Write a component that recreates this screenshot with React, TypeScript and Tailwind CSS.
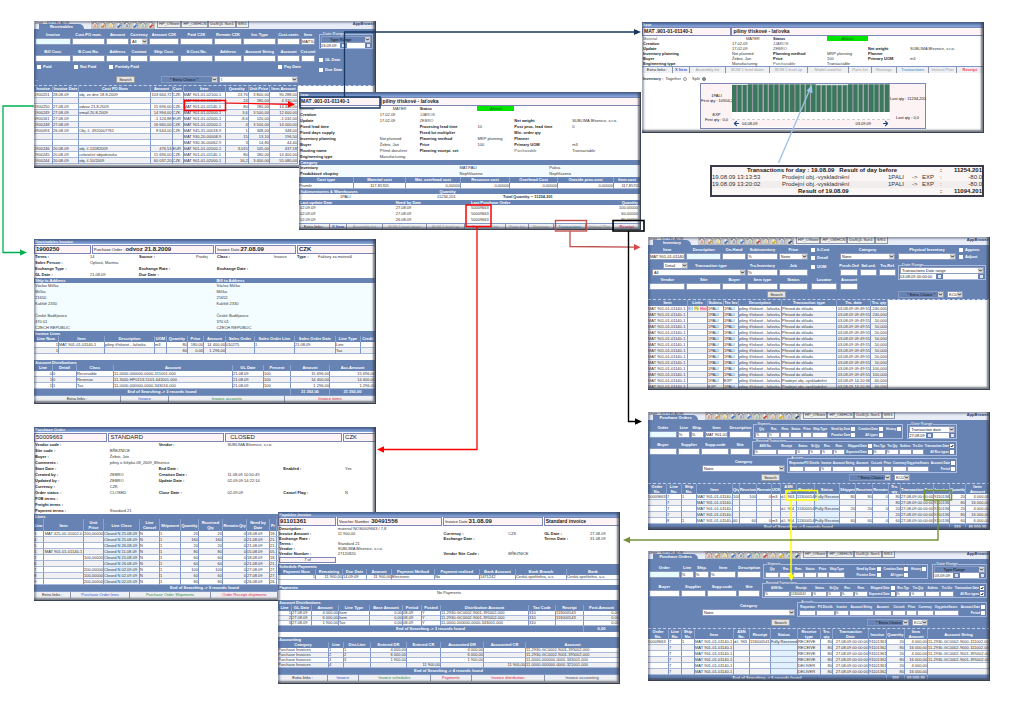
import React from "react";
import clsx from "clsx";
import { ArrowLeft, ArrowRight, ChevronDown } from "lucide-react";

type Cell = React.ReactNode;

const alignment: Record<string, string> = {
  l: "text-left",
  r: "text-right",
  c: "text-center",
};

function Win({
  className,
  children,
}: {
  className: string;
  children: React.ReactNode;
}) {
  return (
    <section
      className={clsx(
        "absolute overflow-hidden bg-white text-[4px] leading-[6px] whitespace-nowrap text-[#333]",
        className,
      )}
    >
      {children}
      <div className="pointer-events-none absolute inset-0 shadow-[inset_-1px_-1px_0_#3a4252,inset_-3px_-3px_2px_rgba(60,65,80,0.7),inset_2px_2px_2px_rgba(50,60,90,0.45)]" />
    </section>
  );
}

function TitleBar({ children }: { children: React.ReactNode }) {
  return (
    <h2 className="h-[5px] bg-linear-to-b from-[#5f7db3] to-[#86a6dc] pl-px leading-[5px] font-bold text-white">
      {children}
    </h2>
  );
}

function Bar({ children }: { children: React.ReactNode }) {
  return (
    <h3 className="h-[5px] bg-[#6683b4] pl-px leading-[5px] font-bold text-white">
      {children}
    </h3>
  );
}

function Box({
  className,
  children,
}: {
  className: string;
  children: React.ReactNode;
}) {
  return (
    <div
      className={clsx(
        "h-[9px] min-w-0 border border-[#7c86b4] bg-[#fff4f5] pl-px leading-[7px] text-[#222]",
        className,
      )}
    >
      {children}
    </div>
  );
}

function Info({
  cols,
  rows,
  className,
}: {
  cols: string;
  rows: Cell[][];
  className?: string;
}) {
  return (
    <div className={clsx("pl-px", className)}>
      {rows.map((row, i) => (
        <div key={i} className={clsx("grid", cols)}>
          {row.map((cell, j) => (
            <div
              key={j}
              className={clsx("min-w-0", j % 2 === 0 && "font-bold text-[#222]")}
            >
              {cell || "\u00a0"}
            </div>
          ))}
        </div>
      ))}
    </div>
  );
}

function Plain({ children }: { children: React.ReactNode }) {
  return <span className="font-normal text-[#555]">{children}</span>;
}

interface TableProps {
  widths: number[];
  head: Cell[];
  align: string;
  rows: Cell[][];
  foot?: [number, Cell][];
  compact?: boolean;
  headHeight?: string;
  blue?: number;
  className?: string;
}

function Table(props: TableProps) {
  const { widths, head, align, rows, foot, compact, headHeight, blue } = props;
  const total = widths.reduce((a, b) => a + b, 0);
  return (
    <table
      className={clsx(
        "table-fixed border-separate border-spacing-0",
        props.className || "w-full",
      )}
    >
      <colgroup>
        {widths.map((w, i) => (
          <col key={i} style={{ width: `${(w / total) * 100}%` }} />
        ))}
      </colgroup>
      <thead>
        <tr className="bg-[#6683b4] text-white">
          {head.map((h, i) => (
            <th
              key={i}
              className={clsx(
                "overflow-hidden border-r border-[#8ba3cf] p-0 text-center align-middle font-bold",
                headHeight
                  ? [headHeight, "leading-[5px] whitespace-pre-line"]
                  : "h-[6px] leading-[6px]",
              )}
            >
              {h}
            </th>
          ))}
        </tr>
      </thead>
      <tbody>
        {rows.map((row, i) => (
          <tr key={i} className={i % 2 ? "bg-[#f1f1f3]" : "bg-white"}>
            {row.map((cell, j) => (
              <td
                key={j}
                className={clsx(
                  "overflow-hidden border-r border-b border-r-[#7f98c6] border-b-[#a9b9d9] p-0",
                  compact ? "h-[5px] leading-[4px]" : "h-[6px] leading-[5px]",
                  alignment[align[j]],
                  blue === j && "bg-[#e2f1ff]",
                )}
              >
                {cell}
              </td>
            ))}
          </tr>
        ))}
      </tbody>
      {foot && (
        <tfoot>
          <tr className="bg-[#6683b4] text-white">
            {foot.map(([span, text], i) => (
              <td
                key={i}
                colSpan={span}
                className="h-[6px] border-r border-[#8ba3cf] p-0 text-center leading-[6px] font-bold"
              >
                {text}
              </td>
            ))}
          </tr>
        </tfoot>
      )}
    </table>
  );
}

function Links({ items }: { items: [string, string][] }) {
  return (
    <nav className="flex border-t border-[#7f98c6] bg-[#eef0f4] text-center">
      {items.map(([text, style]) => (
        <a
          key={text}
          href="#"
          className={clsx(
            "h-[6px] min-w-0 overflow-hidden border-r border-[#8a93a8]",
            style,
          )}
        >
          {text}
        </a>
      ))}
    </nav>
  );
}

/* form controls */

function Field({
  label,
  value = "",
  className,
  tint,
  tight,
}: {
  label: string;
  value?: string;
  className: string;
  tint?: boolean;
  tight?: boolean;
}) {
  return (
    <label
      className={clsx(
        "flex min-w-0 flex-col text-center font-bold text-white",
        tight ? "leading-[5px]" : "leading-[6px]",
        className,
      )}
    >
      <span className={clsx("flex justify-center", tight ? "h-[5px]" : "h-[6px]")}>
        {label}
      </span>
      <input
        defaultValue={value}
        className={clsx(
          "w-full border border-[#8b9cc0] font-normal text-[#222]",
          tight ? "h-[6px]" : "h-[7px]",
          tint ? "bg-[#e8fbff]" : "bg-white",
        )}
      />
    </label>
  );
}

function Select({
  value,
  label,
  className,
  dark,
}: {
  value: string;
  label: string;
  className: string;
  dark?: boolean;
}) {
  return (
    <span className={clsx("relative block h-[7px] min-w-0", className)}>
      <select
        aria-label={label}
        className={clsx(
          "block h-full w-full appearance-none border border-[#8b9cc0] leading-[5px]",
          dark ? "bg-[#6683b4] pl-[8px] text-[#111]" : "bg-white pl-px text-[#222]",
        )}
      >
        <option>{value}</option>
      </select>
      <ChevronDown
        className="pointer-events-none absolute top-px right-px size-[5px] bg-[#d6d6d6] text-black"
        strokeWidth={4}
      />
    </span>
  );
}

function Check({
  label,
  checked,
  after,
  className,
}: {
  label: string;
  checked?: boolean;
  after?: boolean;
  className?: string;
}) {
  return (
    <label
      className={clsx(
        "flex h-[6px] items-center leading-[6px] font-bold text-white",
        after ? "flex-row-reverse gap-px" : "gap-[2px]",
        className,
      )}
    >
      <span className="relative size-[4px]">
        <input
          type="checkbox"
          defaultChecked={checked}
          className="peer block size-[4px] appearance-none bg-white"
        />
        <svg
          viewBox="0 0 8 8"
          className="pointer-events-none absolute inset-0 hidden size-[4px] peer-checked:block"
        >
          <path d="M1.5 4 L3.5 6 L6.5 2" fill="none" stroke="#111" strokeWidth="2" />
        </svg>
      </span>
      {label}
    </label>
  );
}

function Group({
  title,
  className,
  children,
}: {
  title: string;
  className: string;
  children: React.ReactNode;
}) {
  return (
    <fieldset
      className={clsx("min-w-0 border border-[#a9bbdf] px-px text-white", className)}
    >
      <legend className="ml-[2px] h-[4px] leading-[4px]">{title}</legend>
      {children}
    </fieldset>
  );
}

function DateRange({
  type,
  from,
  className,
  dark,
}: {
  type: string;
  from: string;
  className: string;
  dark?: boolean;
}) {
  return (
    <Group title="Date Range" className={className}>
      <Select label="Date range type" value={type} dark={dark} className="w-full" />
      <div className="flex items-center gap-px">
        <input
          aria-label="Date from"
          defaultValue={from}
          className="h-[5px] min-w-0 flex-1 bg-white text-[#222]"
        />
        <span className="size-[5px] border border-[#6b7fae] bg-[#dfe6f4]" />
        <input aria-label="Date to" className="h-[5px] min-w-0 flex-1 bg-white" />
        <span className="size-[5px] border border-[#6b7fae] bg-[#dfe6f4]" />
      </div>
    </Group>
  );
}

function SearchButton() {
  return (
    <button className="h-[7px] w-[19px] border border-[#9a9a9a] bg-[#e4e4e4] leading-[5px] text-[#222]">
      Search
    </button>
  );
}

const accents = ["#c0392b", "#c77f3a", "#d9a800", "#3567b8", "#27406f", "#3b6fd1", "#4d8c4a"];

function ToolIcon({ index }: { index: number }) {
  const color = accents[index % accents.length];
  return (
    <svg viewBox="0 0 16 16" className="size-[8px] shrink-0">
      <rect x="0.5" y="0.5" width="15" height="15" fill="#f3f1ea" stroke="#a0a0a0" />
      <path d="M4 2.5h6l3 3v8H4z" fill="#fff" stroke="#666" />
      <path d="M10 2.5v3h3" fill="none" stroke="#666" />
      <path
        d={index % 2 ? "M5 12l5-5 2 2-5 4z" : "M6 8h5M6 10.500h5M2 6l4-3"}
        fill={index % 2 ? color : "none"}
        stroke={color}
        strokeWidth="1.4"
      />
    </svg>
  );
}

function Toolbar({
  title,
  icons,
  wide,
}: {
  title: string;
  icons: number;
  wide?: boolean;
}) {
  return (
    <header className="flex h-[8px] items-start bg-[#e7ecf6]">
      <div className={clsx("shrink-0", wide ? "w-[57px]" : "w-[50px]")}>
        <p className="h-[3px] pl-px leading-[3px] text-[#445]">User : KITTELADM</p>
        <h2
          className={clsx(
            "ml-[5px] h-[5px] rounded-tr-md bg-[#6683b4] text-center leading-[6px] font-bold text-white",
            wide ? "w-[45px]" : "w-[38px]",
          )}
        >
          {title}
        </h2>
      </div>
      <div className="flex">
        {Array.from({ length: icons }, (_, i) => (
          <ToolIcon key={i} index={i} />
        ))}
      </div>
      <nav className="ml-[2px] flex text-[#334]">
        {["HP_OStore", "HP_OMHCN", "DaSQL Sun1", "SRI1"].map((t) => (
          <a
            key={t}
            href="#"
            className="h-[7px] border border-t-0 border-[#8f98ab] bg-[#f1f1ee] px-px leading-[6px]"
          >
            {t}
          </a>
        ))}
      </nav>
      <p className="ml-auto pr-px leading-[5px] font-bold text-[#223a6b]">AppBrowse</p>
    </header>
  );
}

/* windows */

function Receivables() {
  const m = "MAT 901-01-";
  return (
    <Win className="top-[21px] left-[34px] w-[342px]">
      <Toolbar wide title="Receivables" icons={8} />
      <form className="border-b border-dashed border-[#c4d0ea] bg-[#6683b4] pt-[3px] pb-[2px] pl-px">
        <div className="flex gap-[4px]">
          <div className="w-[280px]">
            <div className="flex gap-px">
              <Field label="Invoice" className="flex-[36]" tint />
              <Field label="Cust.PO num." className="flex-[33]" />
              <Field label="Amount" className="flex-[23]" />
              <div className="flex min-w-0 flex-[18] flex-col text-center font-bold text-white">
                Currency
                <Select label="Currency" value="All" className="w-full font-normal" />
              </div>
              <Field label="Amount CZK" className="flex-[30]" />
              <Field label="Paid CZK" className="flex-[33]" />
              <Field label="Remain CZK" className="flex-[28]" />
              <Field label="Inv. Type" className="flex-[33]" />
              <Field label="Cust.centr." className="flex-[23]" />
              <Field label="Item" value="MAT%" className="flex-[14]" />
            </div>
            <div className="mt-[4px] flex gap-px">
              <Field label="Bill Cust." className="flex-[36]" />
              <Field label="B.Cust.No." className="flex-[33]" />
              <Field label="Address" className="flex-[23]" />
              <Field label="Contact" className="flex-[18]" />
              <Field label="Ship Cust." className="flex-[30]" />
              <Field label="S.Cust.No." className="flex-[33]" />
              <Field label="Address" className="flex-[28]" />
              <Field label="Account String" className="flex-[33]" />
              <Field label="Account" className="flex-[23]" />
              <Field label="Cst.unit" className="flex-[14]" />
            </div>
            <div className="mt-[2px] flex">
              <Check label="Paid" className="ml-[2px] w-[37px]" />
              <Check label="Not Paid" className="w-[35px]" />
              <Check label="Partialy Paid" className="w-[169px]" />
              <Check label="Pay Date" />
            </div>
          </div>
          <div className="w-[54px]">
            <DateRange type="Type Range" from="03.09.09" className="w-full" dark />
            <Check label="GL Date" className="mt-[8px]" />
            <Check label="Due Date" className="mt-[4px]" />
          </div>
        </div>
        <div className="mt-[3px] flex items-center text-white">
          <span className="w-[81px]">--</span>
          <SearchButton />
          <Select label="Extra choice" value="* Extra Choice *" dark className="ml-[26px] w-[57px]" />
          <Select label="Choice" value="I" className="ml-px w-[79px]" />
        </div>
      </form>
      <Table
        className="mb-[4px] w-[264px]"
        widths={[19, 26, 72, 21, 11, 42, 23, 21, 28]}
        align="lllrllrrr"
        head={["Invoice", "Invoice Date", "Cust PO Num", "Amount", "Curr.", "Item", "Quantity", "Unit Price", "Item Amount"]}
        rows={[
          ["1900251", "28.08.09", "obj. ze dne 18.8.2009", "103 664,72", "CZK", m + "02100-1", "23,76", "3 800,00", "90 288,00"],
          ["", "", "", "", "", m + "01140-1", "24", "180,00", "4 320,00"],
          ["1900250", "27.08.09", "odvoz 21.8.2009", "15 696,00", "CZK", m + "01140-1", "80", "180,00", "14 400,00"],
          ["1900249", "27.08.09", "email 20.8.2009", "14 994,00", "CZK", m + "02000-1", "3,6", "3 500,00", "12 600,00"],
          ["3900161", "27.08.09", "", "-1 124,88", "EUR", m + "02000-1", "-8,6", "120,00", "-1 032,00"],
          ["1900248", "27.08.09", "", "16 660,00", "CZK", m + "02000-1", "4", "3 500,00", "14 000,00"],
          ["4900093", "26.08.09", "Obj. č. 4920007761", "8 644,00", "CZK", "MAT 945-31-00018-9", "1", "348,00", "348,00"],
          ["", "", "", "", "", "MAT 930-20-00008-9", "15", "13,10", "196,50"],
          ["", "", "", "", "", "MAT 930-30-00062-9", "3", "14,80", "44,40"],
          ["1900246", "20.08.09", "obj. č.12082009", "476,53", "EUR", m + "02000-1", "3,015", "145,00", "437,18"],
          ["1900245", "20.08.09", "celoroční objednávka", "15 696,00", "CZK", m + "01140-1", "80", "180,00", "14 400,00"],
          ["1900244", "20.08.09", "obj. č.10/2009", "60 037,20", "CZK", m + "02000-1", "16,2", "3 400,00", "55 080,00"],
        ]}
      />
    </Win>
  );
}

const itemLinks: [string, string][] = [
  ["Extra links :", "flex-[31] text-[#222]"],
  ["X Item", "flex-[16] font-bold text-[#3a62d8]"],
  ["Assembly list", "flex-[36] text-[#a0a0a0]"],
  ["BOM 1 level down", "flex-[44] text-[#a0a0a0]"],
  ["BOM 1 level up", "flex-[38] text-[#a0a0a0]"],
  ["Model used list", "flex-[41] text-[#a0a0a0]"],
  ["Parts list", "flex-[22] text-[#a0a0a0]"],
  ["Routings", "flex-[25] text-[#a0a0a0]"],
  ["Transactions", "flex-[32] text-[#2f7fc4]"],
  ["Vertical Plan", "flex-[27] text-[#a0a0a0]"],
  ["Receipt", "flex-[27] font-bold text-[#ff3b5c]"],
];

const active = (
  <span className="block h-[5px] bg-[#00e400] text-center leading-[5px] font-normal text-[#14601a] italic">
    Aktivní
  </span>
);

function ItemWindow() {
  return (
    <Win className="top-[92px] left-[299px] w-[342px]">
      <TitleBar>Item</TitleBar>
      <div className="flex text-[5px] font-bold">
        <Box className="flex-[80]">MAT .901-01-01140-1</Box>
        <Box className="flex-[262]">piliny třískové - laťovka</Box>
      </div>
      <Info
        cols="grid-cols-[80fr_40fr_58fr_37fr_58fr_69fr]"
        rows={[
          [<Plain>Material</Plain>, <span className="pl-[13px]">MATER</span>, "Status", active],
          ["Creation", "17.02.09", <Plain>JJAROS</Plain>, ""],
          ["Update", "17.02.09", <Plain>ZEBRO</Plain>, "", "Net weight", "SUBLIMA Březnice, s.r.o."],
          ["Fixed lead time", "", "Procesing lead time", "10", "Post proc. lead time", "0"],
          ["Fixed days supply", "", "Fixed lot multiplier", "", "Min. order qty", ""],
          ["Inventory planning", "Not planned", "Planning method", "MRP planning", "Planner", ""],
          ["Buyer", "Žebro, Jan", "Price", "100", "Primary UOM", "m3"],
          ["Routing name", "Přímé doručení", "Planning except. set", "", <Plain>Purchasable</Plain>, "Transactable"],
          ["Engineering type", "Manufacturing", "", ""],
        ]}
      />
      <Bar>Category</Bar>
      <Info
        className="bg-[#f3fbff]"
        cols="grid-cols-[160fr_90fr_0fr_92fr]"
        rows={[
          ["Inventory", "MAT.PALI", "", "Paliva"],
          ["Produktové skupiny", "NepřiVazeno", "", "Nepřiřazeno"],
        ]}
      />
      <Table
        widths={[55, 52, 55, 49, 48, 56, 27]}
        align="lcrrrrr"
        head={["Cost type", "Material cost", "Mat. overhead cost", "Resource cost", "Overhead Cost", "Outside proc.cost", "Item cost"]}
        rows={[["Průměr", "117,85705", "0,00000", "0,00000", "0,00000", "0,00000", "117,85705"]]}
      />
      <div className="flex bg-[#6683b4] pl-px leading-[5px] font-bold text-white">
        <h3 className="flex-[140]">Subinventories &amp; Warehouses</h3>
        <span className="flex-[202]">Quantity</span>
      </div>
      <div className="flex pl-[41px]">
        <span className="flex-[97]">1PALI</span>
        <span className="flex-[66]">11234,201</span>
        <b className="flex-[138]">Total Quantity ~ 11234,201</b>
      </div>
      <table className="w-full table-fixed">
        <colgroup>
          <col className="w-[28%]" />
          <col className="w-[22%]" />
          <col className="w-[25%]" />
          <col className="w-[25%]" />
        </colgroup>
        <thead className="bg-[#6683b4] text-white">
          <tr>
            {["Last update Date", "Need by Date", "Last Purchase Order", "Quantity"].map((h, i) => (
              <th key={h} className={clsx("p-0 pr-[3px] pl-px leading-[5px] font-bold", i === 3 ? "text-right" : "text-left")}>
                {h}
              </th>
            ))}
          </tr>
        </thead>
        <tbody>
          {[
            ["02.09.09", "27.08.09", "50009663", "100,00000"],
            ["02.09.09", "27.08.09", "50009663", "60,00000"],
            ["02.09.09", "26.08.09", "50009663", "80,00000"],
          ].map((r, i) => (
            <tr key={i}>
              {r.map((c, j) => (
                <td key={j} className={clsx("p-0 pr-[3px] pl-px", j === 3 && "text-right")}>
                  {c}
                </td>
              ))}
            </tr>
          ))}
        </tbody>
      </table>
      <Links items={itemLinks} />
    </Win>
  );
}

function ReceivablesInvoice() {
  return (
    <Win className="top-[239px] left-[34px] w-[342px] pb-[2px]">
      <TitleBar>Receivables Invoice</TitleBar>
      <div className="flex gap-px pt-px">
        <Box className="flex-[56] text-[6px] font-bold">1900250</Box>
        <Box className="flex-[124]">
          Purchase Order : <b className="text-[6px]">odvoz 21.8.2009</b>
        </Box>
        <Box className="flex-[81]">
          Invoice Date <b className="text-[6px]">27.08.09</b>
        </Box>
        <Box className="flex-[79] text-[6px] font-bold">CZK</Box>
      </div>
      <Info
        cols="grid-cols-[55fr_49fr_57fr_21fr_57fr_23fr_21fr_58fr]"
        rows={[
          ["Terms :", "14", "Source :", "Prodej", "Class :", "Invoice", "Type :", "Faktury za materiál"],
          ["Sales Person :", "Oplová, Martina"],
          ["Exchange Type :", "", "Exchange Rate :", "", "Exchange Date :"],
          ["GL Date :", "21.08.09", "Due Date :"],
        ]}
      />
      <div className="flex bg-[#6683b4] pl-px leading-[5px] font-bold text-white">
        <h3 className="flex-[182]">Ship to Address</h3>
        <h3 className="flex-[160]">Bill to Address</h3>
      </div>
      <div className="flex bg-[#f3fcff] pl-px whitespace-pre-line">
        <p className="flex-[182]">
          {"Václav Mička\nMička\n21650\nKaliště 2330\n\nČeské Budějovice\n370 01\nCZECH REPUBLIC"}
        </p>
        <p className="flex-[160]">
          {"Václav Mička\nMička\n21652\nKaliště 2330\n\nČeské Budějovice\n370 01\nCZECH REPUBLIC"}
        </p>
      </div>
      <Bar>Invoice Lines</Bar>
      <Table
        widths={[25, 46, 50, 12, 21, 16, 22, 29, 40, 41, 25, 15]}
        align="rlllrrrlllll"
        head={["Line Num", "Item", "Description", "UOM", "Quantity", "Price", "Amount", "Sales Order", "Sales Order Line", "Sales Order Date", "Line Type", "Credit"]}
        rows={[
          ["1", "MAT 901-01-01140-1", "piliny třískové - laťovka", "m3", "80", "180,00", "14 400,00", "010275", "1", "21.08.09", "Line", ""],
          ["1", "", "", "", "80", "0,00", "1 296,00", "", "", "", "Tax", ""],
        ]}
      />
      <div className="h-[6px]" />
      <Bar>Account Distributions</Bar>
      <Table
        widths={[19, 24, 37, 119, 31, 27, 39, 46]}
        align="rlllllrr"
        head={["Line", "Detail", "Class", "Account", "GL Date", "Percent", "Amount", "Acc.Amount"]}
        rows={[
          ["0", "0", "Receivable", "11-0000-000000-0000-311001-000", "21.08.09", "100", "15 696,00", "15 696,00"],
          ["1", "0", "Revenue", "11-3000-HP0153-5101-642001-000", "21.08.09", "100", "14 400,00", "14 400,00"],
          ["1", "1", "Tax", "11-0000-000000-0000-343016-000", "21.08.09", "100", "1 296,00", "1 296,00"],
        ]}
        foot={[
          [6, "End of Searching -> 3 records found"],
          [1, "31 392,00"],
          [1, "31 392,00"],
        ]}
      />
      <Links
        items={[
          ["Extra links :", "flex-[87] text-[#222]"],
          ["Invoice", "flex-[48] text-[#2b50d8]"],
          ["Invoice accounts", "flex-[116] text-[#2b8a3e]"],
          ["Invoice items", "flex-[91] text-[#e02038]"],
        ]}
      />
    </Win>
  );
}

function PurchaseOrder() {
  return (
    <Win className="top-[427px] left-[34px] w-[342px] pb-[3px]">
      <TitleBar>Purchase Order</TitleBar>
      <div className="flex gap-px pt-px text-[6px]">
        <Box className="flex-[73]">50009663</Box>
        <Box className="flex-[117]">STANDARD</Box>
        <Box className="flex-[118]">
          <span className="pl-[3px]">CLOSED</span>
        </Box>
        <Box className="flex-[31]">CZK</Box>
      </div>
      <Info
        cols="grid-cols-[75fr_49fr_69fr_0fr_0fr_56fr_62fr_31fr]"
        rows={[
          ["Vendor code :", "", "Vendor :", "", "", "SUBLIMA Březnice, s.r.o."],
          ["Site code :", "BŘEZNICE"],
          ["Buyer :", "Žebro, Jan"],
          ["Comments :", "piliny a štěpka 08_2009_Březnice"],
          ["Start Date :", "", "End Date :", "", "", "", "Enabled :", "Yes"],
          ["Created by :", "ZEBRO", "Creation Date :", "", "", "11.08.09 10:50:49"],
          ["Updated by :", "ZEBRO", "Update Date :", "", "", "02.09.09 14:22:14"],
          ["Currency :", "CZK"],
          ["Order status :", "CLOSED", "Close Date :", "", "", "02.09.09", "Cancel Flag :", "N"],
          ["FOB terms :", ""],
          ["Freight terms :", ""],
          ["Payment terms :", "Standard 21"],
        ]}
      />
      <Bar>Lines</Bar>
      <Table
        headHeight="h-[12px]"
        blue={3}
        widths={[10, 40, 20, 36, 20, 21, 18, 24, 24, 23, 7, 99]}
        align="lcrlllrrrlll"
        head={["Line", "Item", "Unit\nPrice", "Line Close", "Line\nCancel", "Shipment", "Quantity", "Received\nQty", "Remain.Qty", "Need by\nDate", "Pr", ""]}
        rows={[
          ["3", "MAT 425-00-01002-0", "200,00000", "Closed N 25.08.09", "N", "1", "20", "20", "0", "18.08.09", "18.", ""],
          ["4", "", "", "Closed N 25.08.09", "N", "1", "160", "160", "0", "21.08.09", "21.", ""],
          ["5", "", "", "Closed N 26.08.09", "N", "1", "20", "20", "0", "21.08.09", "21.", ""],
          ["1", "MAT 901-01-01140-1", "", "Closed N 11.08.09", "N", "1", "80", "80", "0", "05.08.09", "05.", ""],
          ["2", "", "100,00000", "Closed N 25.08.09", "N", "1", "60", "60", "0", "18.08.09", "18.", ""],
          ["6", "", "", "Closed N 26.08.09", "N", "1", "60", "60", "0", "21.08.09", "21.", ""],
          ["7", "", "200,00000", "Closed N 02.09.09", "N", "1", "100", "100", "0", "27.08.09", "27.", ""],
          ["8", "", "100,00000", "Closed N 02.09.09", "N", "1", "60", "60", "0", "27.08.09", "27.", ""],
          ["9", "", "200,00000", "Closed N 02.09.09", "N", "1", "80", "80", "0", "26.08.09", "26.", ""],
        ]}
        foot={[[12, "End of Searching -> 9 records found"]]}
      />
      <Links
        items={[
          ["Extra links :", "flex-[37] text-[#222]"],
          ["Purchase Order lines", "flex-[58] text-[#2b50d8]"],
          ["Purchase Order Shipments", "flex-[82] text-[#2b8a3e]"],
          ["Order Receipt shipments", "flex-[67] text-[#e02038]"],
          ["", "flex-[98]"],
        ]}
      />
    </Win>
  );
}

function PayablesInvoice() {
  return (
    <Win className="top-[512px] left-[278px] w-[342px] pb-[3px]">
      <TitleBar>Payables Invoice</TitleBar>
      <div className="flex gap-px">
        <Box className="flex-[57] text-[6px] font-bold">91101361</Box>
        <Box className="flex-[106]">
          Voucher Number <b className="pl-px text-[6px]">30491556</b>
        </Box>
        <Box className="flex-[100]">
          Invoice Date <b className="text-[6px]">31.08.09</b>
        </Box>
        <Box className="flex-[76] text-[5px] font-bold">Standard invoice</Box>
      </div>
      <Info
        className="leading-[5px]"
        cols="grid-cols-[59fr_106fr_65fr_36fr_46fr_30fr]"
        rows={[
          ["Description :", "material NOS0009663 / 7,8"],
          ["Invoice Amount :", "11 900,00", "Currency :", "CZK", "GL Date :", "27.08.09"],
          ["Exchange Rate :", "", "Exchange Date :", "", "Terms Date :", "31.08.09"],
          ["Terms :", "Standard 21"],
          ["Vendor :", "SUBLIMA Březnice, s.r.o."],
          ["Vendor Number :", "27120820", "Vendor Site Code :", "BŘEZNICE"],
        ]}
      />
      <div className="mt-px mb-px ml-px h-[6px] w-[57px] border border-[#7c86b4] bg-[#fff4f5] text-center leading-[4px]">
        7 of
      </div>
      <Bar>Schedule Payments</Bar>
      <Table
        compact
        widths={[38, 27, 24, 25, 43, 45, 36, 51, 53]}
        align="rrlrlllll"
        head={["Payment Num", "Remaining", "Due Date", "Amount", "Payment Method", "Payment realized", "Bank Account", "Bank Branch", "Bank"]}
        rows={[["1", "11 900,00", "14.09.09", "11 900,00", "Electronic", "No", "1471242", "Česká spořitelna, a.s.", "Česká spořitelna, a.s."]]}
      />
      <div className="h-[5px]" />
      <Bar>Payments</Bar>
      <p className="pb-[5px] text-center leading-[5px]">No Payments</p>
      <Bar>Account Distributions</Bar>
      <Table
        compact
        widths={[14, 20, 27, 31, 33, 19, 19, 88, 27, 28, 36]}
        align="rlrlrlllllr"
        head={["Line", "GL Date", "Amount", "Line Type", "Base Amount", "Period", "Posted", "Distribution Account", "Tax Code", "Receipt", "Post.Amount"]}
        rows={[
          ["1", "27.08.09", "4 000,00", "Item", "0,00", "08-09", "Y", "11-2930-GC0002-9001-395002-000", "310", "113000543", "0,00"],
          ["2", "27.08.09", "6 000,00", "Item", "0,00", "08-09", "Y", "11-2930-GC0002-9001-395002-000", "310", "113000543", "0,00"],
          ["3", "27.08.09", "1 900,00", "Tax", "0,00", "08-09", "Y", "11-0000-000000-0000-343001-000", "310", "", "0,00"],
        ]}
        foot={[
          [10, "End of Searching -> 3 records found"],
          [1, "0,00"],
        ]}
      />
      <div className="h-[5px]" />
      <Bar>Accounting</Bar>
      <Table
        compact
        widths={[51, 15, 27, 36, 34, 43, 42, 94]}
        align="lllrrrrl"
        head={["Category", "Line", "Dist.Line", "Entered DR", "Entered CR", "Accounted DR", "Accounted CR", "Account"]}
        rows={[
          ["Purchase Invoices", "1", "1", "4 000,00", "", "4 000,00", "", "11-2930-GC0002-9001-395002-000"],
          ["Purchase Invoices", "2", "2", "6 000,00", "", "6 000,00", "", "11-2930-GC0002-9001-395002-000"],
          ["Purchase Invoices", "3", "3", "1 900,00", "", "1 900,00", "", "11-0000-000000-0000-343001-000"],
          ["Purchase Invoices", "4", "", "", "11 900,00", "", "11 900,00", "11-0000-000000-0000-321001-000"],
        ]}
        foot={[[8, "End of Searching -> 4 records found"]]}
      />
      <Links
        items={[
          ["Extra links :", "flex-[50] text-[#222]"],
          ["Invoice", "flex-[30] text-[#2b50d8]"],
          ["Invoice schedules", "flex-[73] text-[#2b8a3e]"],
          ["Payments", "flex-[40] text-[#e02038]"],
          ["Invoice distribution", "flex-[74] text-[#e02038]"],
          ["Invoice accounting", "flex-[75] text-[#444]"],
        ]}
      />
    </Win>
  );
}

function ItemChart() {
  return (
    <Win className="top-[22px] left-[642px] w-[342px] pb-[4px]">
      <TitleBar>Item</TitleBar>
      <div className="flex text-[5px] font-bold">
        <Box className="flex-[88]">MAT .901-01-01140-1</Box>
        <Box className="flex-[254]">piliny třískové - laťovka</Box>
      </div>
      <Info
        className="leading-[5px]"
        cols="grid-cols-[89fr_41fr_54fr_41fr_42fr_74fr]"
        rows={[
          [<Plain>Material</Plain>, <span className="pl-[14px]">MATER</span>, "Status", active],
          ["Creation", "17.02.09", <Plain>JJAROS</Plain>, ""],
          ["Update", "17.02.09", <Plain>ZEBRO</Plain>, "", "Net weight", "SUBLIMA Březnice, s.r.o."],
          ["Inventory planning", "Not planned", "Planning method", "MRP planning", "Planner", ""],
          ["Buyer", "Žebro, Jan", "Price", "100", "Primary UOM", "m3"],
          ["Engineering type", "Manufacturing", <Plain>Purchasable</Plain>, "Transactable"],
        ]}
      />
      <Links items={itemLinks} />
      <div className="flex items-center gap-[2px] pt-[3px] pl-px text-[#333]">
        <b>Inventory :</b>
        <label className="flex items-center gap-[2px]">
          Together
          <input type="radio" name="inv" className="size-[4px] appearance-none rounded-full border border-[#999]" />
        </label>
        <label className="ml-[3px] flex items-center gap-[2px]">
          Split
          <input
            type="radio"
            name="inv"
            defaultChecked
            className="size-[4px] appearance-none rounded-full border border-[#777] bg-[#999]"
          />
        </label>
      </div>
      <div className="mx-[58px] mt-px flex h-[46px] border border-[#7c86b4] bg-[#fdf3f4] text-center text-[#111]">
        <div className="flex w-[31px] flex-col justify-between pt-[9px] pb-[6px] leading-[5px]">
          <p>1PALI<br />First qty : 10904,2</p>
          <p>EXP<br />First qty : 0,0</p>
        </div>
        <div className="min-w-0 flex-1 bg-white">
          <svg viewBox="0 0 158 28" preserveAspectRatio="none" className="block h-[28px] w-full">
            <rect width="158" height="28" fill="#dfe9e4" />
            {Array.from({ length: 30 }, (_, i) => {
              const top = i < 3 ? 1 : i > 15 && i < 22 ? 1.2 : 0.3;
              return (
                <g key={i}>
                  <rect x={i * 5.27} y={top} width="4.2" height={28 - top} fill="#39785d" />
                  <rect x={i * 5.27 + 4} y={top} width="0.9" height={28 - top} fill="#7c7c86" />
                </g>
              );
            })}
          </svg>
          <div className="mt-[7px] border-t border-dashed border-[#cfcfcf]" />
          <div className="flex items-center bg-[#fdf3f4] px-px font-normal">
            <ArrowLeft className="size-[7px] text-[#1f497d]" strokeWidth={4} />
            <span className="pl-[2px]">04.08.09</span>
            <span className="ml-auto pr-[11px]">03.09.09</span>
            <ArrowRight className="size-[7px] text-[#1f497d]" strokeWidth={4} />
          </div>
        </div>
        <div className="flex w-[35px] flex-col justify-between pt-[12px] pb-[7px]">
          <p>Last qty : 11234,201</p>
          <p>Last qty : 0,0</p>
        </div>
      </div>
    </Win>
  );
}

function DayTransactions() {
  return (
    <section className="absolute top-[165px] left-[710px] w-[274px] border-2 border-[#3b3b4a] bg-[#fbf6f6] text-[6px] leading-[7px] whitespace-nowrap text-[#333]">
      <div className="flex font-bold text-[#222]">
        <span className="flex-1 pl-[35px]">
          Transactions for day : 19.08.09 &nbsp; Result of day before
        </span>
        <span className="w-[14px]">:</span>
        <span>11254.201</span>
      </div>
      {["19.08.09 13:13:53", "19.08.09 13:20:02"].map((t) => (
        <div key={t} className="flex odd:bg-[#f3eeee]">
          <span className="w-[70px]">{t}</span>
          <span className="flex-1">Prodejní obj.-vyskladnění</span>
          <span className="w-[24px]">1PALI</span>
          <span className="w-[10px]">-&gt;</span>
          <span className="w-[18px]">EXP</span>
          <span className="w-[14px]">:</span>
          <span className="w-[28px] text-right">-80.0</span>
        </div>
      ))}
      <div className="flex font-bold text-[#222]">
        <span className="flex-1 pl-[86px]">Result of 19.08.09</span>
        <span className="w-[14px]">:</span>
        <span>11094.201</span>
      </div>
    </section>
  );
}

const quantities = [
  "-240,000", "240,000", "-50,000", "50,000", "-50,000", "50,000", "-50,000",
  "50,000", "-50,000", "50,000", "-100,000", "100,000", "-60,000", "60,000",
];

function Inventory() {
  return (
    <Win className="top-[237px] left-[648px] w-[342px]">
      <Toolbar title="Inventory" icons={12} />
      <form className="border-b border-dashed border-[#c4d0ea] bg-[#6683b4] pt-[2px] pb-px pl-px">
        <div className="flex gap-[3px]">
          <div className="w-[159px]">
            <div className="flex gap-px">
              <Field label="Item" value="MAT 901-01-01140" className="flex-[36]" />
              <Field label="Description" className="flex-[34]" tint />
              <Field label="On-Hand" className="flex-[24]" />
              <Field label="Subinventory" value="%" className="flex-[30]" />
              <div className="min-w-0 flex-[29] text-center font-bold text-white">
                Price
                <Select label="Price" value="None" className="w-full font-normal" />
              </div>
            </div>
            <div className="mt-[2px] flex items-end gap-px">
              <div className="min-w-0 flex-[96]">
                <div className="flex items-center gap-[7px] pl-[14px] font-bold text-white">
                  <Select label="Detail" value="Detail" className="w-[25px] font-normal" />
                  Transaction type
                </div>
                <Select label="Transaction type" value="All" className="ml-[3px]" />
              </div>
              <Field label="Trx.Inventory" value="%" className="flex-[30]" />
              <Field label="Job" className="flex-[29]" />
            </div>
            <div className="mt-px flex gap-px">
              <Field label="Vendor" className="flex-[36]" />
              <Field label="Site" className="flex-[34]" />
              <Field label="Buyer" className="flex-[24]" />
              <Field label="Item type" className="flex-[30]" />
              <Field label="Status" className="flex-[29]" />
            </div>
          </div>
          <div className="flex w-[26px] flex-col gap-[2px]">
            <Check label="It.Cost" />
            <Check label="Detail" />
            <Check label="UOM" className="mt-px" />
            <Field label="Locator" className="mt-auto" />
          </div>
          <div className="w-[146px]">
            <div className="flex gap-[3px]">
              <div className="w-[55px] text-center font-bold text-white">
                Category
                <Select label="Category" value="None" className="w-full font-normal" />
              </div>
              <div className="w-[58px] text-center font-bold text-white">
                Physical Inventory
                <Select label="Physical inventory" value="" className="w-full font-normal" />
              </div>
              <div className="flex flex-col gap-px">
                <Check label="Approv." />
                <Check label="Adjust" />
              </div>
            </div>
            <div className="mt-[3px] flex gap-[2px]">
              <div>
                <div className="flex gap-[2px]">
                  <Field label="Purch.Ord" className="w-[18px]" />
                  <Field label="Sal.ord." className="w-[17px]" />
                  <Field label="Trx.Ref." className="w-[17px]" />
                </div>
                <Field label="Account" className="mt-px w-[18px]" />
              </div>
              <div className="min-w-0 flex-1">
                <DateRange type="Transactions Date range" from="03.08.09 00:00:00" className="w-full" />
              </div>
            </div>
          </div>
        </div>
        <div className="mt-px flex items-center">
          <span className="w-[118px]" />
          <SearchButton />
          <Select label="Extra choice" value="* Extra Choice *" dark className="ml-auto w-[46px]" />
          <Select label="Unit" value="KCU" className="mr-[27px] ml-[3px] w-[16px]" />
        </div>
      </form>
      <Table
        className="w-[240px]"
        widths={[40, 20, 16, 15, 43, 55, 34, 17]}
        align="llllllrr"
        head={["Item", "Links", "Subinv.", "Trx Inv", "Description", "Transaction type", "Trx. date", "Trx. qty"]}
        rows={quantities.map((q, i) => [
          "MAT 901-01-01140-1",
          i === 0 ? (
            <span className="flex justify-between">
              <a href="#" className="bg-[#dceaff] text-[#2b50d8]">X I</a>
              <a href="#" className="bg-[#fff2a8] text-[#2b8a3e]">Pk</a>
              <a href="#" className="bg-[#ffd9e4] text-[#e02038]">Hist</a>
            </span>
          ) : (
            ""
          ),
          i === 13 ? "EXP" : "1PALI",
          i === 12 ? "EXP" : "1PALI",
          "piliny třískové - laťovka",
          i > 11 ? "Prodejní obj.-vyskladnění" : "Převod do skladu",
          i > 11 ? "03.08.09 14:10:36" : "03.08.09 09:49:55",
          q,
        ])}
      />
    </Win>
  );
}

interface OrderSearchProps {
  item?: string;
  qty?: string;
  asn: [string, string];
  type: string;
  from: string;
  roomy?: boolean;
}

function OrderSearch({ item, qty, asn, type, from, roomy }: OrderSearchProps) {
  return (
    <form
      className={clsx(
        "border-b border-dashed border-[#c4d0ea] bg-[#6683b4] pb-[2px] pl-px",
        roomy ? "pt-[3px]" : "pt-[2px]",
      )}
    >
      <div className={clsx("flex flex-col", roomy ? "w-[338px] gap-[2px]" : "w-[308px]")}>
        <div className="flex items-end gap-[2px]">
          <div className="flex min-w-0 flex-[103] gap-px pb-px">
            <Field label="Order" className="flex-[28]" tint />
            <Field label="Line" value="%" className="flex-[12]" />
            <Field label="Ship." value="%" className="flex-[13]" />
            <Field label="Item" value={item} className="flex-[24]" />
            <Field label="Description" className="flex-[22]" />
          </div>
          <div className="flex min-w-0 flex-[205] gap-[4px]">
            <Group title="Shipment" className="flex-[153] text-[3px]">
              <div className="flex items-end">
                <Field tight label="Qty" value={qty} className="flex-[13]" />
                <Field tight label="Rec." value={qty} className="flex-[13]" />
                <Field tight label="Rem." className="flex-[10]" />
                <Field tight label="Status" className="flex-[12]" />
                <Field tight label="Price" className="flex-[11]" />
                <Field tight label="Ship.Type" className="flex-[16]" />
                <div className="flex min-w-0 flex-[76] justify-end gap-[3px]">
                  <div>
                    <Check label="Need by Date" after />
                    <Check label="Promise Date" after />
                  </div>
                  <div>
                    <Check label="Creation Date" after />
                    <Check label="All types" after />
                  </div>
                  <Check label="History" after />
                </div>
              </div>
            </Group>
            <DateRange type={type} from={from} className="flex-[48]" dark={roomy} />
          </div>
        </div>
        <div className="flex items-end gap-[2px]">
          <div className="flex min-w-0 flex-[103] gap-px pb-px">
            <Field label="Buyer" className="flex-[28]" />
            <Field label="Supplier" className="flex-[23]" />
            <Field label="Supp.code" className="flex-[28]" />
            <Field label="Site" className="flex-[20]" />
          </div>
          <Group title="Received Transactions" className="flex-[205] text-[3px]">
            <div className="flex items-end">
              <Field tight label="ASN No." value={asn[0]} className="flex-[21]" />
              <Field tight label="Receipt" value={asn[1]} className="flex-[18]" />
              <Field tight label="Status" value="%" className="flex-[12]" />
              <Field tight label="St.Qty" value="%" className="flex-[11]" />
              <Field tight label="Rec." value="%" className="flex-[11]" />
              <Field tight label="Rem." value="%" className="flex-[11]" />
              <div className="mx-px">
                <Check label="Shipped Date" after />
                <Check label="Expected Date" after />
              </div>
              <Field tight label="Rec.Typ" value="%" className="flex-[12]" />
              <Field tight label="Trx.Qty" value="%" className="flex-[12]" />
              <Field tight label="Subinv." className="flex-[12]" />
              <Field tight label="Trx.Usr" className="flex-[11]" />
              <div className="mx-px">
                <Check label="Transaction Date" after checked />
                <Check label="All Rcv types" after checked={roomy} />
              </div>
            </div>
          </Group>
        </div>
        <div className="flex items-end gap-[2px]">
          <div className="min-w-0 flex-[103] pb-px pl-[53px] text-center font-bold text-white">
            Category
            <Select label="Category" value="None" className="w-full font-normal" />
          </div>
          <Group title="Accounts" className="flex-[205] text-[3px]">
            <div className="flex items-end">
              <Field tight label="Requestor" className="flex-[18]" />
              <Field tight label="PO Distrib." className="flex-[20]" />
              <Field tight label="Invoice" value="%" className="flex-[15]" />
              <Field tight label="Account String" className="flex-[27]" />
              <Field tight label="Account" className="flex-[19]" />
              <Field tight label="Cst.unit" className="flex-[16]" />
              <Field tight label="Price" className="flex-[11]" />
              <Field tight label="Currency" className="flex-[18]" />
              <Field tight label="Org.price/hours" className="flex-[27]" />
              <div className="ml-[2px]">
                <Check label="Account Date" after />
                <Check label="Period" after />
              </div>
            </div>
          </Group>
        </div>
      </div>
      <div className={clsx("flex items-center", roomy ? "mt-[2px] pl-[122px]" : "mt-px pl-[112px]")}>
        <SearchButton />
        <Select
          label="Extra choice"
          value="* Extra Choice *"
          dark
          className={clsx("w-[42px]", roomy ? "ml-[77px]" : "ml-[69px]")}
        />
        <Select label="Unit" value="KCU" className="ml-[3px] w-[16px]" />
      </div>
    </form>
  );
}

function ReceivedOrders() {
  const m = "MAT 901-01-01140-1";
  const d = "27.08.09 00:00:00";
  return (
    <Win className="top-[412px] left-[648px] w-[342px]">
      <Toolbar wide title="Purchase Orders" icons={12} />
      <OrderSearch item="MAT 901-01-0" qty="%" asn={["%", ""]} type="Transaction date" from="27.08.09" />
      <Table
        headHeight="h-[10px]"
        blue={10}
        widths={[19, 15, 15, 36, 7, 17, 15, 9, 16, 18, 25, 16, 17, 16, 12, 33, 16, 16, 24]}
        align="lllllrrllllrrrrrlrr"
        head={["Order No.", "Line\nNo.", "Ship\nNo.", "Item", "Qty", "Received", "Remain", "UOM", "ASN\nNo.", "Receipt", "Status", "Shipped", "Received", "Remain", "Trx.\nqty", <span className="whitespace-nowrap">Transaction Date</span>, "Invoice", "Quantity", "Item\nAmount"]}
        rows={[
          ["50009663", "7", "1", m, "100", "100", "0", "m3", "d.l. 963", "113000541", "Fully Received", "80", "80", "0", "80", d, "91101361", "20", "4 000,00"],
          ["", "7", "", m, "", "", "", "", "", "", "", "", "", "", "80", d, "91101362", "80", "16 000,00"],
          ["", "7", "", m, "", "", "", "", "d.l. 964", "113000543", "Fully Received", "20", "20", "0", "20", d, "91101361", "20", "4 000,00"],
          ["", "7", "", m, "", "", "", "", "", "", "", "", "", "", "20", d, "91101362", "80", "16 000,00"],
          ["", "8", "1", m, "60", "60", "0", "m3", "d.l. 964", "113000543", "Fully Received", "60", "60", "0", "60", d, "91101361", "60", "6 000,00"],
        ]}
        foot={[
          [17, "End of Searching -> 5 records found"],
          [1, "260"],
          [1, "46 000,00"],
        ]}
      />
    </Win>
  );
}

function OrderTransactions() {
  const rows = [
    ["RECEIVE", "91101361", "20", "4 000,00", "11-2930-GC0002-9000-111002-000"],
    ["RECEIVE", "91101362", "80", "16 000,00", "11-2930-GC0002-9000-111002-000"],
    ["RECEIVE", "91101361", "20", "4 000,00", "11-2930-GC0002-9001-395002-000"],
    ["RECEIVE", "91101362", "80", "16 000,00", "11-2930-GC0002-9001-395002-000"],
    ["DELIVER", "91101361", "20", "4 000,00", ""],
    ["DELIVER", "91101362", "80", "16 000,00", ""],
  ];
  return (
    <Win className="top-[551px] left-[648px] w-[342px]">
      <Toolbar wide title="Purchase Orders" icons={12} />
      <OrderSearch roomy item="%" asn={["%", "113000541"]} type="Type Range" from="03.09.09" />
      <Table
        headHeight="h-[10px]"
        blue={6}
        widths={[21, 13, 13, 39, 16, 21, 27, 23, 12, 36, 18, 18, 23, 62]}
        align="llllllllrrlrrl"
        head={["Order\nNo.", "Line\nNo.", "Ship\nNo.", "Item", "ASN\nNo.", "Receipt", "Status", "Receive\ntype", "Trx.\nqty", "Transaction\nDate", "Invoice", "Quantity", "Item\nAmount", "Account String"]}
        rows={rows.map(([kind, invoice, qty, amount, account], i) => [
          i ? "" : "50009663",
          "7",
          i ? "" : "1",
          "MAT 901-01-01140-1",
          i ? "" : "d.l. 963",
          i ? "" : "113000541",
          i ? "" : "Fully Received",
          kind,
          "80",
          "27.08.09 00:00:00",
          invoice,
          qty,
          amount,
          account,
        ])}
        foot={[
          [11, "End of Searching -> 6 records found"],
          [1, "300"],
          [1, "60 000,00"],
          [1, ""],
        ]}
      />
    </Win>
  );
}

function Connectors() {
  return (
    <svg
      width="1024"
      height="710"
      viewBox="0 0 1024 710"
      fill="none"
      className="pointer-events-none absolute top-0 left-0"
    >
      <g stroke="#00b050" strokeWidth="1.3">
        <path d="M34 106H3V252.500H21" />
        <path d="M20 249.500L27 252.500L20 255.500Z" fill="#00b050" stroke="none" />
      </g>
      <g stroke="#ff0000">
        <rect x="184.500" y="100.500" width="41" height="10" strokeWidth="1.5" />
        <path d="M226 103L289 104.300" strokeWidth="1.2" />
        <path d="M288 101L295 104.400L288 107.500Z" fill="#ff0000" stroke="none" />
        <rect x="466" y="205" width="25" height="21.500" strokeWidth="1.5" />
        <path d="M477 227V449.500H383" strokeWidth="1.3" />
        <path d="M384 446.300L377 449.500L384 452.700Z" fill="#ff0000" stroke="none" />
      </g>
      <g stroke="#17375e">
        <rect x="300" y="97" width="80" height="11" strokeWidth="1.5" />
        <path d="M344.500 97V32H635" strokeWidth="1.3" />
        <path d="M634 29L641 32L634 35Z" fill="#17375e" stroke="none" />
      </g>
      <g stroke="#c0504d">
        <rect x="555.500" y="220.500" width="31" height="10.500" strokeWidth="1.4" />
        <path d="M570 231V246.500L635 247.200" strokeWidth="1.3" />
        <path d="M634 244L640.500 247.200L634 250.400Z" fill="#d94a4a" stroke="none" />
      </g>
      <g stroke="#000">
        <rect x="613" y="220.500" width="31" height="10.500" strokeWidth="1.6" />
        <path d="M628.500 231V421.500H636" strokeWidth="1.4" />
        <path d="M635 418.300L642 421.500L635 424.700Z" fill="#000" stroke="none" />
      </g>
      <g stroke="#9dc3e6">
        <path d="M778.500 163L810 89" strokeWidth="1.4" />
        <path d="M812 84.500L806.500 91L812.500 93.200Z" fill="#9dc3e6" stroke="none" />
      </g>
      <g stroke="#ffff00">
        <rect x="786" y="490.500" width="31.500" height="9.500" strokeWidth="1.5" />
        <path d="M791 500V575" strokeWidth="1.5" />
        <path d="M788 574.500L791.300 581L794.500 574.500Z" fill="#ffff00" stroke="none" />
      </g>
      <g stroke="#76923c">
        <rect x="924.500" y="490.500" width="27" height="9.500" strokeWidth="1.5" />
        <path d="M938 500V540H629" strokeWidth="1.4" />
        <path d="M630 536.800L623 540L630 543.200Z" fill="#76923c" stroke="none" />
      </g>
    </svg>
  );
}

export default function App() {
  return (
    <main className="relative min-h-screen overflow-hidden bg-white font-['Liberation_Sans',Arial,sans-serif]">
      <Receivables />
      <ItemWindow />
      <ReceivablesInvoice />
      <PurchaseOrder />
      <PayablesInvoice />
      <ItemChart />
      <DayTransactions />
      <Inventory />
      <ReceivedOrders />
      <OrderTransactions />
      <Connectors />
    </main>
  );
}
